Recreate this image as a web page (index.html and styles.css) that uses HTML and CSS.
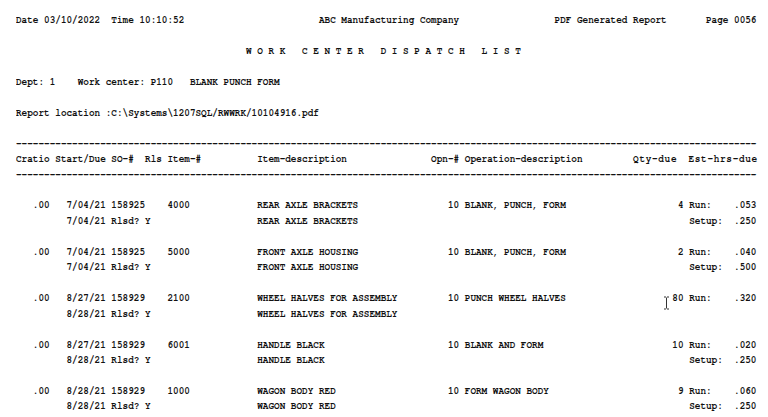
FILE: index.html
```html
<!DOCTYPE html>
<html lang="en">

<head>
    <meta charset="UTF-8">
    <meta name="viewport" content="width=device-width, initial-scale=1.0">
    <title>Work Center Dispatch List</title>
    <link rel="stylesheet" href="styles.css">
</head>

<body>

    <div class="page">
<pre class="report">Date 03/10/2022  Time 10:10:52                        ABC Manufacturing Company                 PDF Generated Report       Page 0056

                                         <b class="title">W O R K   C E N T E R   D I S P A T C H   L I S T</b>

Dept: 1    Work center: P110   BLANK PUNCH FORM

Report location :C:\Systems\1207SQL/RWWRK/10104916.pdf

------------------------------------------------------------------------------------------------------------------------------------
Cratio Start/Due SO-#  Rls Item-#          Item-description               Opn-# Operation-description         <span class="wide">Qty-due</span>  <span class="wide">Est-hrs-due</span>
------------------------------------------------------------------------------------------------------------------------------------

   .00   7/04/21 158925    4000            REAR AXLE BRACKETS                10 BLANK, PUNCH, FORM                    4 Run:    .053
         7/04/21 Rlsd? Y                   REAR AXLE BRACKETS                                                           Setup:  .250

   .00   7/04/21 158925    5000            FRONT AXLE HOUSING                10 BLANK, PUNCH, FORM                    2 Run:    .040
         7/04/21 Rlsd? Y                   FRONT AXLE HOUSING                                                           Setup:  .500

   .00   8/27/21 158929    2100            WHEEL HALVES FOR ASSEMBLY         10 PUNCH WHEEL HALVES                   80 Run:    .320
         8/28/21 Rlsd? Y                   WHEEL HALVES FOR ASSEMBLY

   .00   8/27/21 158929    6001            HANDLE BLACK                      10 BLANK AND FORM                       10 Run:    .020
         8/28/21 Rlsd? Y                   HANDLE BLACK                                                                 Setup:  .250

   .00   8/28/21 158929    1000            WAGON BODY RED                    10 FORM WAGON BODY                       9 Run:    .060
         8/28/21 Rlsd? Y                   WAGON BODY RED                                                               Setup:  .250</pre>

        <svg class="cursor" width="7" height="14" viewBox="0 0 7 14">
            <path d="M1 1h2M4 1h2M3.5 1.5v11M1 13h2M4 13h2" fill="none" stroke="#333" stroke-width="1"/>
        </svg>
    </div>

</body>

</html>
```

FILE: styles.css
```css
html,
body {
    margin: 0;
    padding: 0;
    background-color: #fff;
}

.page {
    position: relative;
    width: 768px;
    height: 417px;
    padding: 12px 0 0 16px;
    box-sizing: border-box;
    overflow: hidden;
}

/* 132 column print, squeezed to 5.6px a column */
.report {
    margin: 0;
    font-family: "Nimbus Mono PS", "Nimbus Mono L", "FreeMono", "Liberation Mono", monospace;
    font-size: 11.5px;
    font-weight: bold;
    line-height: 15.45px;
    color: #111;
    transform: scaleX(.813);
    transform-origin: 0 0;
}

.title {
    font-weight: bold;
}

.wide {
    letter-spacing: .86px;
}

.cursor {
    position: absolute;
    left: 663px;
    top: 296px;
}
```
